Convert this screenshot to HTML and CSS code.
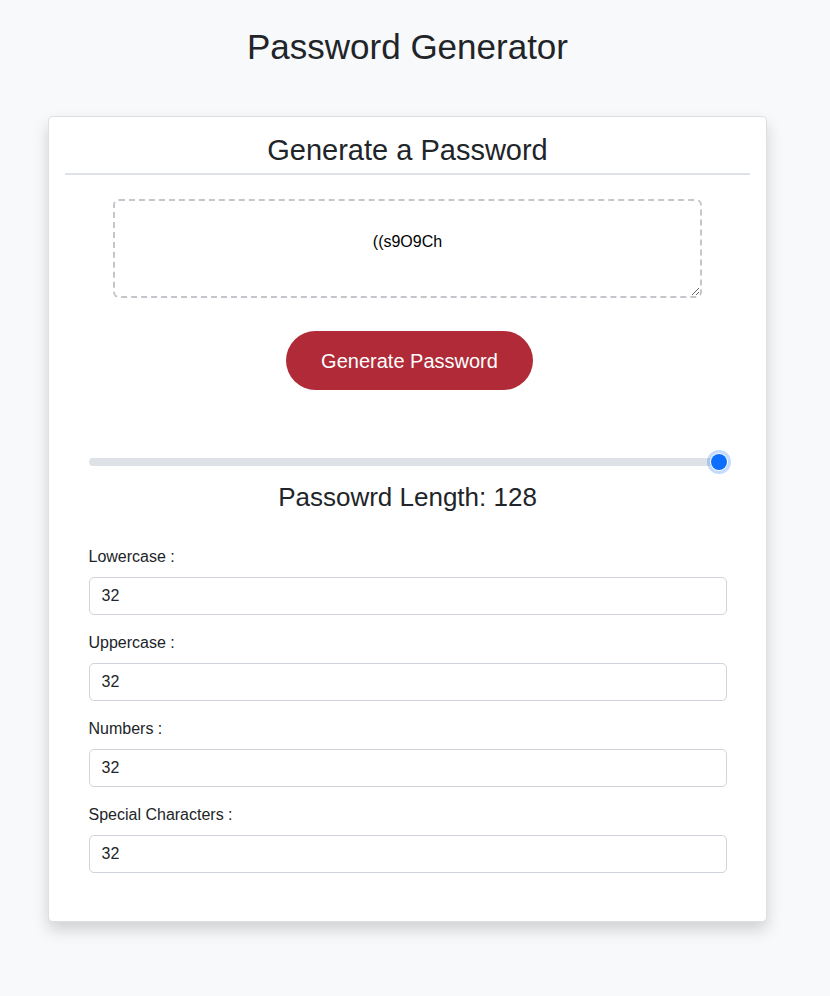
FILE: index.html
```html
<!DOCTYPE html>
<html lang="en">
<head>
<meta charset="utf-8">
<title>Password Generator</title>
<link rel="stylesheet" href="styles.css">
</head>
<body>
<h1 class="title">Password Generator</h1>
<div class="card">
  <h2 class="card-title">Generate a Password</h2>
  <textarea class="output" readonly>((s9O9Ch</textarea>
  <div class="actions">
    <button class="btn-generate" type="button">Generate Password</button>
  </div>
  <div class="form">
    <input class="range" type="range" min="8" max="128" value="128">
    <div class="length">Passowrd Length: 128</div>
    <div class="group">
      <label class="label">Lowercase :</label>
      <input class="field" type="text" value="32">
    </div>
    <div class="group">
      <label class="label">Uppercase :</label>
      <input class="field" type="text" value="32">
    </div>
    <div class="group">
      <label class="label">Numbers :</label>
      <input class="field" type="text" value="32">
    </div>
    <div class="group">
      <label class="label">Special Characters :</label>
      <input class="field" type="text" value="32">
    </div>
  </div>
</div>
</body>
</html>
```
FILE: styles.css
```css
* { box-sizing: border-box; }
html, body { margin: 0; }
html { background: #f8f9fa; }
body {
  background: #f8f9fa;
  color: #212529;
  font-family: "Liberation Sans", Arial, sans-serif;
  padding: 0 15px 40px 0;
}
.title {
  margin: 0;
  padding-top: 26px;
  font-size: 35px;
  line-height: 42px;
  font-weight: 400;
  text-align: center;
}
.card {
  width: 719px;
  margin: 48px auto 0;
  background: #fff;
  border: 1px solid rgba(0,0,0,.125);
  border-radius: 5px;
  box-shadow: 0 .5rem 1rem rgba(0,0,0,.16);
  padding: 16px 16px 32px;
}
.card-title {
  margin: 0;
  font-size: 29px;
  line-height: 35px;
  font-weight: 400;
  text-align: center;
  padding-bottom: 5px;
  border-bottom: 2px solid #dee2e6;
}
.output {
  display: block;
  width: 589px;
  height: 99px;
  margin: 24px auto 0;
  border: 2px dashed #c3c7cc;
  border-radius: 6px;
  padding: 29px 12px;
  font-family: "Liberation Sans", Arial, sans-serif;
  font-size: 16px;
  line-height: 24px;
  color: #000;
  text-align: center;
  background: #fff;
  outline: none;
}
.actions {
  display: flex;
  justify-content: center;
  padding-left: 4px;
  margin-top: 33px;
}
.btn-generate {
  padding: 14.5px 35.5px;
  border: none;
  border-radius: 30px;
  background: #b02a37;
  color: #fff;
  font-family: "Liberation Sans", Arial, sans-serif;
  font-size: 20px;
  line-height: 30px;
}
.form {
  width: 638px;
  margin: 0 auto;
}
.range {
  -webkit-appearance: none;
  appearance: none;
  display: block;
  width: 100%;
  height: 24px;
  margin: 60px 0 0;
  padding: 0;
  background: transparent;
}
.range::-webkit-slider-runnable-track {
  height: 8px;
  border-radius: 8px;
  background: #dee2e6;
}
.range::-webkit-slider-thumb {
  -webkit-appearance: none;
  appearance: none;
  width: 16px;
  height: 16px;
  margin-top: -4px;
  border-radius: 50%;
  background: #0d6efd;
  border: 0;
  box-shadow: 0 0 0 1px #fff, 0 0 0 4px rgba(13,110,253,.25);
}
.length {
  margin-top: 7.5px;
  font-size: 26px;
  line-height: 31px;
  text-align: center;
  margin-bottom: 32.5px;
}
.group { margin-bottom: 16px; }
.label {
  display: block;
  font-size: 16px;
  line-height: 24px;
  margin-bottom: 8px;
}
.field {
  display: block;
  width: 100%;
  height: 38px;
  padding: 6px 12px;
  border: 1px solid #ced4da;
  border-radius: 5px;
  font-family: "Liberation Sans", Arial, sans-serif;
  font-size: 16px;
  line-height: 24px;
  color: #212529;
  background: #fff;
}
```
